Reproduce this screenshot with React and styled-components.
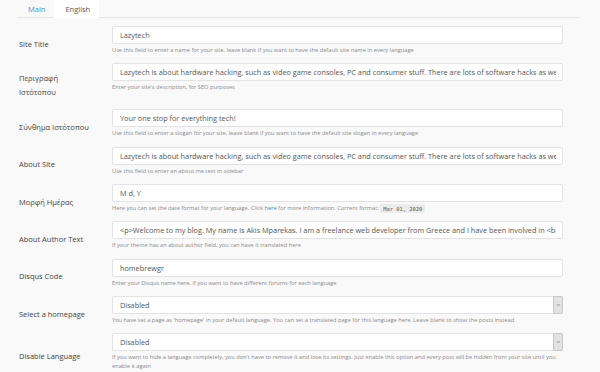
import styled, { createGlobalStyle } from "styled-components";

const GlobalStyle = createGlobalStyle`
  html, body {
    margin: 0;
    padding: 0;
    background: #f9f9f9;
    font-family: "Open Sans", "Liberation Sans", sans-serif;
  }
`;

const Page = styled.div`
  width: 600px;
  height: 372px;
  overflow: hidden;
  background: #f9f9f9;
`;

const Tabs = styled.div`
  display: flex;
  margin: 0 20px 0 17px;
  height: 17px;
  border-bottom: 1px solid #e6e6e6;
`;

const Tab = styled.div`
  display: flex;
  align-items: center;
  padding: 0 9px 0 11px;
  font-size: 7.5px;
  color: ${(p) => (p.active ? "#555" : "#4a8fd0")};
  background: ${(p) => (p.active ? "#fff" : "transparent")};
  margin-bottom: -1px;
  border-bottom: 1px solid ${(p) => (p.active ? "#fff" : "transparent")};
`;

const Panel = styled.div`
  padding: 8px 37px 0 19px;
`;

const Row = styled.div`
  display: flex;
  align-items: center;
`;

const Label = styled.div`
  width: 93px;
  flex-shrink: 0;
  padding: 8px 20px 10px 0;
  line-height: 14px;
  font-size: 7.5px;
  color: #444;
  box-sizing: border-box;
`;

const Field = styled.div`
  flex: 1;
  min-width: 0;
  align-self: flex-start;
  padding-bottom: 8.35px;
`;

const Input = styled.input`
  display: block;
  width: 100%;
  height: 18px;
  box-sizing: border-box;
  border: 1px solid #e3e3e3;
  border-radius: 2px;
  background: #fff;
  padding: 0 6px 0 7px;
  font-family: "Open Sans", "Liberation Sans", sans-serif;
  font-size: 7.3px;
  color: #555;
  outline: none;
`;

const SelectWrap = styled.div`
  position: relative;
`;

const Select = styled.select`
  display: block;
  width: 100%;
  height: 18px;
  box-sizing: border-box;
  border: 1px solid #e3e3e3;
  border-radius: 2px;
  background: #fff;
  padding: 0 6px 0 7px;
  font-family: "Open Sans", "Liberation Sans", sans-serif;
  font-size: 7.3px;
  color: #555;
  appearance: none;
  outline: none;
`;

const Arrow = styled.div`
  position: absolute;
  right: 0;
  top: 0;
  width: 10px;
  height: 18px;
  box-sizing: border-box;
  background: #e2e2e2;
  border: 1px solid #c8c8c8;
  border-radius: 0 2px 2px 0;
  display: flex;
  align-items: center;
  justify-content: center;
`;

const Help = styled.div`
  margin-top: 2px;
  font-size: 5.7px;
  line-height: 9px;
  color: #8a8a8a;
`;

const HelpLink = styled.a`
  color: #3c8dbc;
  text-decoration: none;
`;

const Code = styled.code`
  font-family: "DejaVu Sans Mono", "Liberation Mono", monospace;
  font-size: 5.4px;
  background: #ececec;
  color: #555;
  padding: 1.5px 3px;
`;

const Chevron = () => (
  <svg width="5" height="4" viewBox="0 0 5 4">
    <path d="M1 1.2 L2.5 2.7 L4 1.2" fill="none" stroke="#777" strokeWidth="0.8" />
  </svg>
);

const rows = [
  {
    label: "Site Title",
    value: "Lazytech",
    help: "Use this field to enter a name for your site, leave blank if you want to have the default site name in every language",
  },
  {
    label: "Περιγραφή Ιστότοπου",
    value:
      "Lazytech is about hardware hacking, such as video game consoles, PC and consumer stuff. There are lots of software hacks as well",
    help: "Enter your site's description, for SEO purposes",
  },
  {
    label: "Σύνθημα Ιστότοπου",
    value: "Your one stop for everything tech!",
    help: "Use this field to enter a slogan for your site, leave blank if you want to have the default site slogan in every language",
  },
  {
    label: "About Site",
    value:
      "Lazytech is about hardware hacking, such as video game consoles, PC and consumer stuff. There are lots of software hacks as well",
    help: "Use this field to enter an about me text in sidebar",
  },
  {
    label: "Μορφή Ημέρας",
    value: "M d, Y",
    help: (
      <>
        Here you can set the date format for your language. Click <HelpLink href="#">here</HelpLink> for more
        information. Current format: <Code>Mar 01, 2020</Code>
      </>
    ),
  },
  {
    label: "About Author Text",
    value:
      "<p>Welcome to my blog. My name is Akis Mparekas. I am a freelance web developer from Greece and I have been involved in <b>",
    help: "If your theme has an about author field, you can have it translated here",
  },
  {
    label: "Disqus Code",
    value: "homebrewgr",
    help: "Enter your Disqus name here, if you want to have different forums for each language",
  },
  {
    label: "Select a homepage",
    select: "Disabled",
    help: "You have set a page as 'homepage' in your default language. You can set a translated page for this language here. Leave blank to show the posts instead",
  },
  {
    label: "Disable Language",
    select: "Disabled",
    help: "If you want to hide a language completely, you don't have to remove it and lose its settings. Just enable this option and every post will be hidden from your site until you enable it again",
  },
];

const App = () => {
  return (
    <Page>
      <GlobalStyle />
      <Tabs>
        <Tab>Main</Tab>
        <Tab active>English</Tab>
      </Tabs>
      <Panel>
        {rows.map((r) => (
          <Row key={r.label}>
            <Label>{r.label}</Label>
            <Field>
              {r.select ? (
                <SelectWrap>
                  <Select defaultValue={r.select}>
                    <option>{r.select}</option>
                  </Select>
                  <Arrow>
                    <Chevron />
                  </Arrow>
                </SelectWrap>
              ) : (
                <Input defaultValue={r.value} readOnly />
              )}
              <Help>{r.help}</Help>
            </Field>
          </Row>
        ))}
      </Panel>
    </Page>
  );
};

export default App;
